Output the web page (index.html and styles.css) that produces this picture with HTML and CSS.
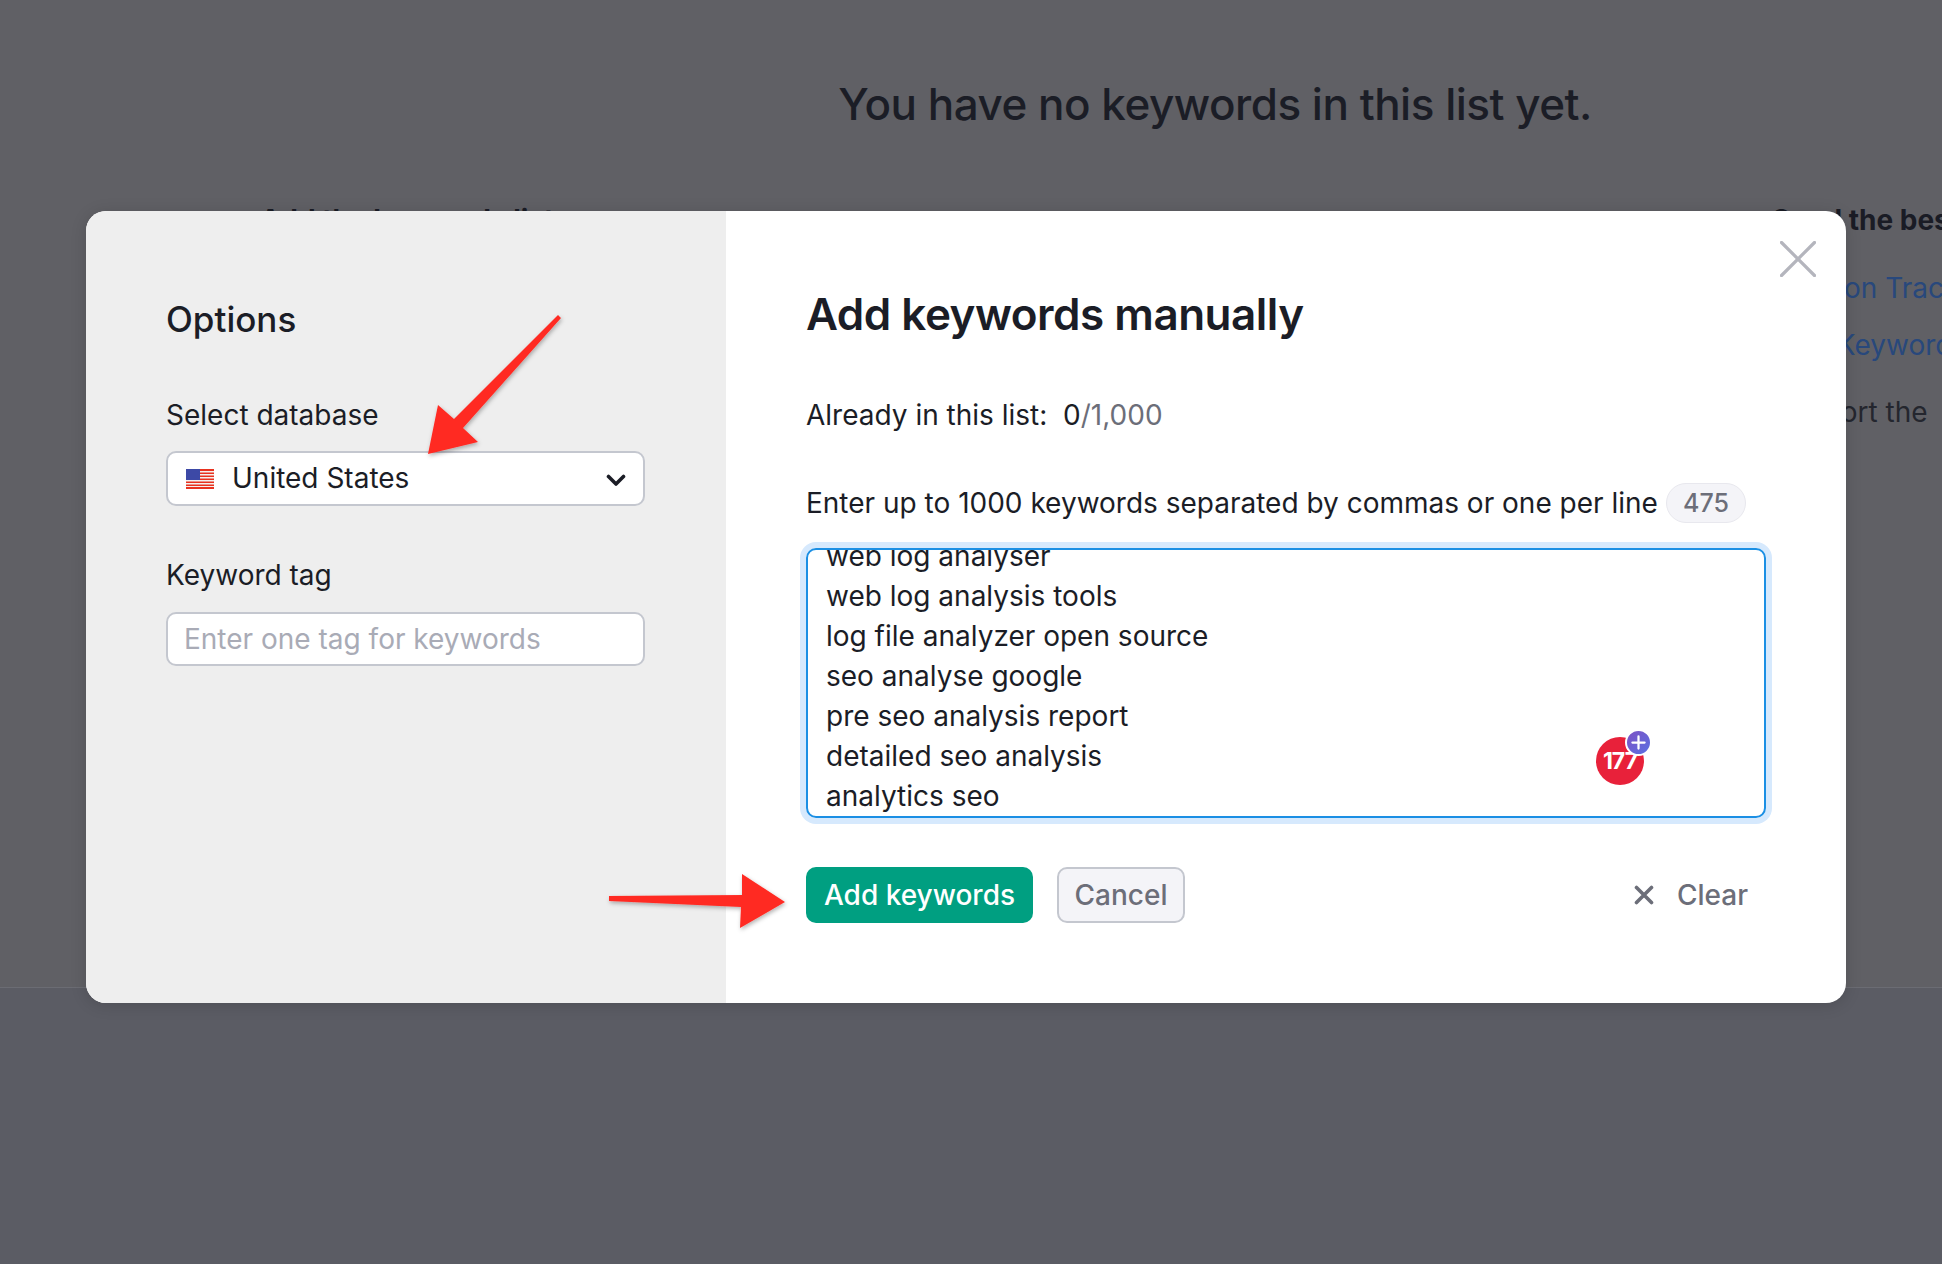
FILE: index.html
```html
<!DOCTYPE html>
<html lang="en">
<head>
<meta charset="utf-8">
<title>Add keywords manually</title>
<link rel="stylesheet" href="styles.css">
</head>
<body>
<div class="page">
  <div class="content">
    <h1 class="empty-title">You have no keywords in this list yet.</h1>
    <div class="cols">
      <div class="col-left"><p class="col-head">Add the keywords list</p></div>
      <div class="col-right">
        <p class="col-head">Send the best keywords</p>
        <p class="col-link first">Position Tracking</p>
        <p class="col-link second">Find Keyword Magic</p>
        <p class="col-text">Support the</p>
      </div>
    </div>
  </div>
  <div class="footer"></div>
</div>

<div class="modal">
  <aside class="side">
    <h2 class="side-title">Options</h2>
    <label class="side-label first">Select database</label>
    <div class="field select">
      <svg class="flag" viewBox="0 0 28 20" width="28" height="20" aria-hidden="true">
        <rect width="28" height="20" fill="#f4f0ee"/>
        <g fill="#e8321f">
          <rect y="0" width="28" height="2"/><rect y="3.5" width="28" height="1.5"/><rect y="6.5" width="28" height="1.5"/><rect y="9.5" width="28" height="1.5"/><rect y="12.5" width="28" height="1.5"/><rect y="15.5" width="28" height="1.5"/><rect y="18" width="28" height="2"/>
        </g>
        <rect width="14" height="11" fill="#3d49a6"/>
      </svg>
      <span class="select-text">United States</span>
      <svg class="chev" viewBox="0 0 20 13" width="20" height="13" aria-hidden="true"><path d="M2.5 2.5 10 10l7.5-7.5" fill="none" stroke="#1b1d26" stroke-width="3.6" stroke-linecap="round" stroke-linejoin="round"/></svg>
    </div>
    <label class="side-label second">Keyword tag</label>
    <div class="field input"><span class="placeholder">Enter one tag for keywords</span></div>
  </aside>

  <section class="main">
    <h2 class="main-title">Add keywords manually</h2>
    <p class="already">Already in this list:&nbsp; 0<span class="muted">/1,000</span></p>
    <div class="enter-row">
      <span>Enter up to 1000 keywords separated by commas or one per line</span>
      <span class="count">475</span>
    </div>
    <div class="area">
      <div class="line">web log analyser</div>
      <div class="line">web log analysis tools</div>
      <div class="line">log file analyzer open source</div>
      <div class="line">seo analyse google</div>
      <div class="line">pre seo analysis report</div>
      <div class="line">detailed seo analysis</div>
      <div class="line">analytics seo</div>
    </div>
    <div class="actions">
      <button class="btn primary">Add keywords</button>
      <button class="btn secondary">Cancel</button>
      <button class="clear">
        <svg viewBox="0 0 20 20" width="20" height="20" aria-hidden="true"><path d="M2.5 2.5l15 15M17.5 2.5l-15 15" stroke="#6c6e79" stroke-width="3.6" stroke-linecap="round"/></svg>
        <span>Clear</span>
      </button>
    </div>
  </section>

  <svg class="close" viewBox="0 0 36 36" width="36" height="36" aria-hidden="true"><path d="M1.5 1.5l33 33M34.5 1.5l-33 33" stroke="#b4b5bd" stroke-width="3.2" stroke-linecap="round"/></svg>

  <div class="ext-badge">
    <span class="ext-count">177</span>
    <span class="ext-plus">
      <svg viewBox="0 0 16 16" width="15" height="15" aria-hidden="true"><path d="M8 1.5v13M1.5 8h13" stroke="#fff" stroke-width="2.4" stroke-linecap="round"/></svg>
    </span>
  </div>
</div>

<svg class="arrows" viewBox="0 0 1942 1264" width="1942" height="1264" aria-hidden="true">
  <defs>
    <filter id="arrow-shadow" x="-20%" y="-20%" width="140%" height="140%">
      <feDropShadow dx="1" dy="2" stdDeviation="2" flood-color="#000" flood-opacity=".3"/>
    </filter>
  </defs>
  <g fill="#ff2a23" filter="url(#arrow-shadow)">
    <polygon points="561,318 558,315 454,419 438,405 428,454 478,442 463,428"/>
    <polygon points="609,896 742,895 742,874 785,902 740,928 741,907 609,901"/>
  </g>
</svg>
</body>
</html>
```
FILE: styles.css
```css
* { box-sizing: border-box; }
html, body { margin: 0; height: 100%; }
body {
  width: 1942px;
  height: 1264px;
  overflow: hidden;
  position: relative;
  font-family: Inter, "Liberation Sans", sans-serif;
  font-size: 28px;
  line-height: 40px;
  color: #1b1d26;
  background: #5b5c64;
}
p, h1, h2 { margin: 0; font-weight: 400; }

.page { height: 1264px; display: flex; flex-direction: column; }
.content { height: 988px; padding-top: 76px; background: #606065; border-bottom: 1px solid #6b6c73; overflow: hidden; }
.footer { flex: 1; background: #5b5c64; }
.empty-title { padding-left: 488px; text-align: center; font-size: 44px; line-height: 56px; font-weight: 500; letter-spacing: -.5px; color: #1b1d26; }
.cols { display: grid; grid-template-columns: 1512px 1fr; padding-left: 260px; margin-top: 68px; white-space: nowrap; }
.col-head { font-weight: 700; color: #1a1c25; }
.col-link { color: #28487c; }
.col-link.first { margin-top: 28px; }
.col-link.second { margin-top: 17px; }
.col-text { margin-top: 27px; color: #24262e; }

.modal {
  position: absolute;
  left: 86px;
  top: 211px;
  width: 1760px;
  height: 792px;
  display: flex;
  background: #fff;
  border-radius: 20px;
  overflow: hidden;
  box-shadow: 0 2px 16px rgba(0, 0, 0, .15);
}
.side { width: 640px; padding: 86px 81px 0 80px; background: #eeeeee; display: flex; flex-direction: column; }
.side-title { font-size: 35px; line-height: 44px; font-weight: 500; }
.side-label.first { margin-top: 54px; }
.side-label.second { margin-top: 49px; }
.field { background: #fff; border: 2px solid #c4c7cf; border-radius: 10px; display: flex; align-items: center; }
.select { height: 55px; margin-top: 16px; padding: 0 17px 0 18px; }
.select-text { margin-left: 18px; flex: 1; margin-top: -2px; }
.chev { margin-top: 3px; }
.input { height: 54px; margin-top: 17px; padding: 0 16px; }
.placeholder { color: #a9abb6; }

.main { flex: 1; padding: 75px 80px 0; display: flex; flex-direction: column; }
.main-title { font-size: 44px; line-height: 56px; font-weight: 600; letter-spacing: -.5px; }
.already { margin-top: 53px; }
.muted { color: #6c6e79; }
.enter-row { margin-top: 48px; height: 40px; display: flex; align-items: center; gap: 8px; white-space: nowrap; }
.count { width: 80px; height: 40px; border: 1px solid #e8e8ee; border-radius: 20px; background: #f4f4f8; color: #6c6e79; text-align: center; font-size: 25px; line-height: 38px; font-weight: 500; }
.area {
  margin-top: 25px;
  height: 270px;
  border: 2px solid #1b8fe4;
  border-radius: 10px;
  box-shadow: 0 0 0 6px #d6e9fd;
  padding: 0 18px;
  display: flex;
  flex-direction: column;
  justify-content: flex-end;
  overflow: hidden;
}
.line { flex: none; height: 40px; white-space: nowrap; }
.actions { margin-top: 49px; display: flex; align-items: center; gap: 24px; }
.btn { height: 56px; font: inherit; font-weight: 500; border-radius: 10px; padding: 0; }
.primary { width: 227px; background: #009f81; color: #fff; border: 0; }
.secondary { width: 128px; background: #f4f4f8; color: #6c6e79; border: 2px solid #c4c7cf; }
.clear { margin-left: auto; margin-right: 18px; display: flex; align-items: center; gap: 23px; background: none; border: 0; padding: 0; font: inherit; font-weight: 500; color: #6c6e79; }

.close { position: absolute; left: 1694px; top: 30px; }
.ext-badge { position: absolute; left: 1510px; top: 518px; width: 56px; height: 56px; }
.ext-count { position: absolute; left: 0; top: 8px; width: 48px; height: 48px; border-radius: 50%; background: #e8213a; color: #fff; font-size: 23px; font-weight: 700; line-height: 48px; text-align: center; letter-spacing: -1px; }
.ext-plus { position: absolute; left: 29px; top: 0; width: 27px; height: 27px; border-radius: 50%; border: 2px solid #fff; background: linear-gradient(135deg, #7e52c4, #5a70e2); display: flex; align-items: center; justify-content: center; }
.arrows { position: absolute; left: 0; top: 0; pointer-events: none; }
```
